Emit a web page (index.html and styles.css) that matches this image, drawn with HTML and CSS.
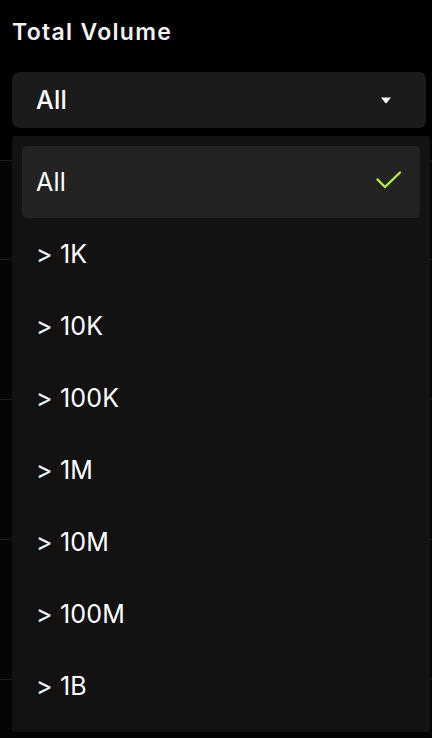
FILE: index.html
```html
<!DOCTYPE html>
<html>
<head>
<meta charset="utf-8">
<link rel="stylesheet" href="styles.css">
</head>
<body>
<div class="page">
  <div class="filter">
    <div class="label">Total Volume</div>
    <div class="select">
      <span class="select-value">All</span>
      <svg class="caret" width="12" height="7" viewBox="0 0 12 7"><path d="M1 0.5 H11 L6.6 6 Q6 6.6 5.4 6 Z" fill="#fff"/></svg>
    </div>
  </div>
  <div class="rows">
    <div class="row row-first"></div>
    <div class="row"></div>
    <div class="row"></div>
    <div class="row"></div>
    <div class="row row-last"></div>
  </div>
  <div class="menu">
    <div class="item active"><span>All</span>
      <svg class="check" width="26" height="20" viewBox="0 0 26 20"><polyline points="1.5,8.5 9,16 24,1.5" fill="none" stroke="#b6f03c" stroke-width="2.4" stroke-linecap="round" stroke-linejoin="round"/></svg>
    </div>
    <div class="item"><span>&gt; 1K</span></div>
    <div class="item"><span>&gt; 10K</span></div>
    <div class="item"><span>&gt; 100K</span></div>
    <div class="item"><span>&gt; 1M</span></div>
    <div class="item"><span>&gt; 10M</span></div>
    <div class="item"><span>&gt; 100M</span></div>
    <div class="item"><span>&gt; 1B</span></div>
  </div>
</div>
</body>
</html>
```
FILE: styles.css
```css
* { box-sizing: border-box; }
html, body { margin: 0; padding: 0; background: #000; }
body { font-family: Inter, "Noto Sans", sans-serif; color: #fff; width: 432px; height: 738px; overflow: hidden; }
.page { position: relative; height: 738px; overflow: hidden; }
.filter { padding: 15px 6px 0 12px; }
.label { font-size: 23px; font-weight: 600; line-height: 34px; letter-spacing: 1.3px; color: #f2f2f2; }
.select {
  margin-top: 23px; height: 56px; background: #1b1b1b; border-radius: 7px;
  display: flex; align-items: center; justify-content: space-between;
  padding: 0 34px 0 24px;
}
.select-value { font-size: 25px; font-weight: 500; letter-spacing: 0.3px; }
.caret { display: block; }
.rows { margin-top: 32px; }
.row { height: 140px; border-top: 1px solid #1c1c1c; background: #050505; }
.row-first { height: 99px; }
.row-last { height: 59px; }
.menu {
  position: absolute; top: 136px; left: 12px; width: 418px; height: 596px;
  background: #121212; border-radius: 3px; padding: 10px;
}
.item {
  height: 72px; display: flex; align-items: center; justify-content: space-between;
  padding: 0 18px 0 14px; font-size: 25px; font-weight: 400; letter-spacing: 0.2px; color: #fff; border-radius: 5px;
}
.item.active { background: #232323; }
.check { display: block; margin-top: -2px; }
```
